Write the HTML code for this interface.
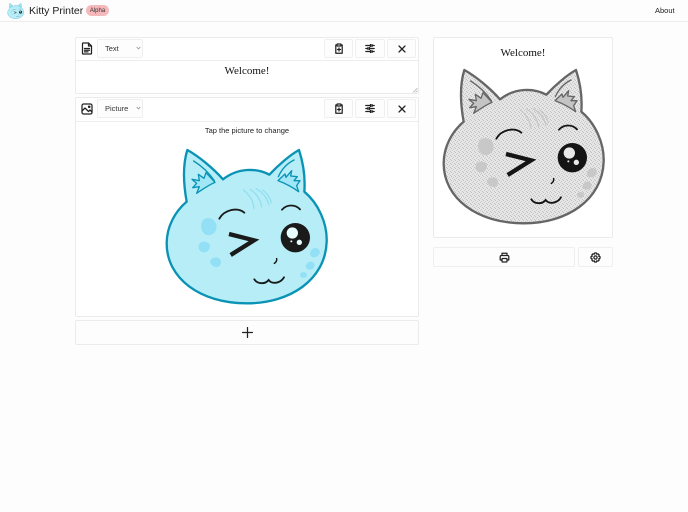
<!DOCTYPE html>
<html><head><meta charset="utf-8"><title>Kitty Printer</title>
<style>
html,body{margin:0;padding:0;width:688px;height:512px;overflow:hidden;background:#fdfdfd;font-family:"Liberation Sans",sans-serif;color:#222}
.a{position:absolute;box-sizing:border-box}
.card{border:1px solid #ebebeb;border-radius:2px;background:#fff}
.btn{border:1px solid #efefef;border-radius:2px;background:#fdfdfd;display:flex;align-items:center;justify-content:center}
.line{height:1px;background:#eeeeee}
svg{display:block}
.ic{fill:none;stroke:#222;stroke-width:1.25;stroke-linecap:round;stroke-linejoin:round}
.t{white-space:nowrap;line-height:1}
.blue{--body:#b6edf7;--ln:#0a93b5;--in:#a0e6f6;--sp:#93e0f6;--hair:#93dff0;--ink:#1a1a1a;--hi:#e8fbfd}
.gray{--body:url(#grain);--ln:#666;--in:#c4c4c4;--sp:#c8c8c8;--hair:#c8c8c8;--ink:#141414;--hi:#e8e8e8}
</style></head><body>
<svg width="0" height="0" style="position:absolute">
<defs>
<pattern id="grain" width="4" height="4" patternUnits="userSpaceOnUse" patternTransform="scale(3)">
 <rect width="4" height="4" fill="#e6e6e6"/>
 <rect x="0" y="0" width="1" height="1" fill="#c0c0c0"/><rect x="2" y="1" width="1" height="1" fill="#c6c6c6"/><rect x="1" y="2" width="1" height="1" fill="#ccc"/><rect x="3" y="3" width="1" height="1" fill="#c0c0c0"/>
</pattern>
<g id="cat">
 <path d="M112 30C145 48 190 85 219 118C265 82 320 84 358 104C385 75 420 45 447 30C460 70 466 115 463 155C505 190 532 250 530 305C526 420 420 490 290 490C150 490 50 415 50 310C50 260 75 215 110 185C100 130 98 75 112 30Z" style="fill:var(--body);stroke:var(--ln)" stroke-width="7" stroke-linejoin="round"/>
 <path d="M131 63C155 78 178 100 193 122M432 60C412 70 395 88 385 110" fill="none" style="stroke:var(--ln)" stroke-width="4" stroke-linecap="round"/>
 <path d="M126 118L148 122L145 103L162 115L168 98L195 127C175 135 155 150 140 160L148 140L128 143L140 130Z" style="fill:var(--in);stroke:var(--ln)" stroke-width="4" stroke-linejoin="round"/>
 <path d="M384 122L405 102L408 112L425 92L422 108L442 110L432 122L450 122L440 137L446 155C425 140 405 130 384 122Z" style="fill:var(--in);stroke:var(--ln)" stroke-width="4" stroke-linejoin="round"/>
 <g fill="none" style="stroke:var(--hair)" stroke-width="4" stroke-linecap="round">
  <path d="M280 150C300 165 310 185 312 205"/>
  <path d="M300 148C320 160 332 180 335 200"/>
  <path d="M318 146C340 158 352 175 357 195"/>
  <path d="M338 150C352 160 360 172 364 188"/>
 </g>
 <g style="fill:var(--sp)">
  <path d="M172 234C195 234 205 255 197 272C190 288 168 290 160 278C148 262 152 236 172 234Z"/>
  <path d="M160 305C178 303 185 318 176 330C168 342 150 338 146 325C144 314 150 306 160 305Z"/>
  <path d="M198 352C212 352 218 368 208 378C198 386 184 378 180 366C180 358 188 352 198 352Z"/>
  <path d="M495 324C508 324 514 336 506 345C498 355 484 354 480 345C478 335 485 325 495 324Z"/>
  <path d="M482 365C493 365 498 376 490 385C482 392 470 390 467 380C467 372 474 366 482 365Z"/>
  <path d="M460 396C470 396 474 404 468 411C460 416 450 412 450 405C450 400 455 396 460 396Z"/>
 </g>
 <path d="M208 236C222 210 262 200 283 218M396 209C410 193 435 192 450 208" fill="none" style="stroke:var(--ink)" stroke-width="5.5" stroke-linecap="round"/>
 <path d="M237 282L312 301L242 345" fill="none" style="stroke:var(--ink)" stroke-width="13" stroke-linejoin="miter"/>
 <circle cx="436" cy="293" r="44" style="fill:var(--ink)"/>
 <circle cx="427" cy="279" r="17" style="fill:var(--hi)"/>
 <circle cx="448" cy="307" r="8" style="fill:var(--hi)"/>
 <circle cx="424" cy="304" r="3" style="fill:var(--hi)"/>
 <path d="M380 356C381 362 378 367 373 370" fill="none" style="stroke:var(--ink)" stroke-width="4.5" stroke-linecap="round"/>
 <path d="M313 418C322 432 345 434 356 420C366 434 392 430 402 412" fill="none" style="stroke:var(--ink)" stroke-width="5.5" stroke-linecap="round"/>
</g>
</defs>
</svg>

<!-- nav -->
<div class="a" style="left:0;top:21px;width:688px;height:1px;background:#ececec"></div>
<svg class="a blue" style="left:7px;top:3px" width="17" height="16" viewBox="30 20 510 480"><use href="#cat"/></svg>
<div class="a t" style="left:29px;top:6px;font-size:10.5px;color:#1c1c1c">Kitty Printer</div>
<div class="a t" style="left:86px;top:5px;width:23px;height:11px;border-radius:6px;background:#f6b9bb;font-size:6px;line-height:12px;text-align:center;color:#333">Alpha</div>
<div class="a t" style="left:655px;top:7px;font-size:7.5px;color:#222">About</div>

<!-- text card -->
<div class="a card" style="left:75px;top:37px;width:344px;height:57px"></div>
<div class="a line" style="left:76px;top:60px;width:342px"></div>
<svg class="a ic" style="left:81px;top:42px" width="12" height="13" viewBox="0 0 12 13"><path d="M2 1H7.5L10.5 4V11.2Q10.5 12 9.6 12H2.4Q1.5 12 1.5 11.2V1.8Q1.5 1 2 1Z"/><path d="M7.5 1V4H10.5M3.5 6.5H8.5M3.5 8.2H8.5M3.5 9.9H7"/></svg>
<div class="a btn" style="left:97px;top:39px;width:46px;height:19px;justify-content:flex-start;padding-left:7px;font-size:7.5px;color:#333">Text</div>
<svg class="a" style="left:136px;top:46px" width="5" height="4" viewBox="0 0 5 4"><path d="M.7 1L2.5 3L4.3 1" fill="none" stroke="#888" stroke-width=".7"/></svg>
<div class="a btn" style="left:324px;top:39px;width:29px;height:19px"><svg class="ic" width="10" height="11" viewBox="0 0 10 11"><path d="M3 2H1.8V10.2H8.2V2H7"/><rect x="3" y="1" width="4" height="2" rx=".4"/><path d="M5 5V8M3.5 6.5H6.5"/></svg></div>
<div class="a btn" style="left:355px;top:39px;width:30px;height:19px"><svg class="ic" width="10" height="9" viewBox="0 0 10 9"><path d="M.8 1.5H5M7.5 1.5H9.2M.8 4.5H2.5M5 4.5H9.2M.8 7.5H5M7.5 7.5H9.2M5.5 .5V2.5M7 .5V2.5M3 3.5V5.5M4.5 3.5V5.5M5.5 6.5V8.5M7 6.5V8.5"/></svg></div>
<div class="a btn" style="left:387px;top:39px;width:29px;height:19px"><svg class="ic" width="8" height="8" viewBox="0 0 8 8"><path d="M1 1L7 7M7 1L1 7"/></svg></div>
<div class="a t" style="left:76px;top:66px;width:342px;text-align:center;font:11px/1 'Liberation Serif',serif;color:#111">Welcome!</div>
<svg class="a" style="left:412px;top:87px" width="6" height="6" viewBox="0 0 6 6"><path d="M1 5.5L5.5 1M3.5 5.5L5.5 3.5" stroke="#aaa" stroke-width=".7" fill="none"/></svg>

<!-- picture card -->
<div class="a card" style="left:75px;top:97px;width:344px;height:220px"></div>
<div class="a line" style="left:76px;top:121px;width:342px"></div>
<svg class="a ic" style="left:81px;top:103px" width="12" height="12" viewBox="0 0 12 12"><rect x="1" y="1" width="10" height="10" rx="1.6"/><path d="M1 8L4 5L7.5 8.5L9 7L11 9"/><circle cx="8.2" cy="3.8" r=".7"/></svg>
<div class="a btn" style="left:97px;top:99px;width:46px;height:19px;justify-content:flex-start;padding-left:7px;font-size:7.5px;color:#333">Picture</div>
<svg class="a" style="left:136px;top:106px" width="5" height="4" viewBox="0 0 5 4"><path d="M.7 1L2.5 3L4.3 1" fill="none" stroke="#888" stroke-width=".7"/></svg>
<div class="a btn" style="left:324px;top:99px;width:29px;height:19px"><svg class="ic" width="10" height="11" viewBox="0 0 10 11"><path d="M3 2H1.8V10.2H8.2V2H7"/><rect x="3" y="1" width="4" height="2" rx=".4"/><path d="M5 5V8M3.5 6.5H6.5"/></svg></div>
<div class="a btn" style="left:355px;top:99px;width:30px;height:19px"><svg class="ic" width="10" height="9" viewBox="0 0 10 9"><path d="M.8 1.5H5M7.5 1.5H9.2M.8 4.5H2.5M5 4.5H9.2M.8 7.5H5M7.5 7.5H9.2M5.5 .5V2.5M7 .5V2.5M3 3.5V5.5M4.5 3.5V5.5M5.5 6.5V8.5M7 6.5V8.5"/></svg></div>
<div class="a btn" style="left:387px;top:99px;width:29px;height:19px"><svg class="ic" width="8" height="8" viewBox="0 0 8 8"><path d="M1 1L7 7M7 1L1 7"/></svg></div>
<div class="a t" style="left:76px;top:127px;width:342px;text-align:center;font-size:7.5px;color:#222">Tap the picture to change</div>
<svg class="a blue" style="left:150px;top:140px" width="190" height="175" viewBox="0 0 570 525"><use href="#cat"/></svg>

<!-- add -->
<div class="a btn" style="left:75px;top:320px;width:344px;height:25px;border-color:#ebebeb"><svg class="ic" width="11" height="11" viewBox="0 0 11 11"><path d="M5.5 .5V10.5M.5 5.5H10.5"/></svg></div>

<!-- preview -->
<div class="a card" style="left:433px;top:37px;width:180px;height:201px"></div>
<svg class="a gray" style="left:426.7px;top:60px" width="190" height="175" viewBox="0 0 570 525"><use href="#cat"/></svg>
<div class="a t" style="left:434px;top:48px;width:178px;text-align:center;font:11px/1 'Liberation Serif',serif;color:#111">Welcome!</div>
<div class="a btn" style="left:433px;top:247px;width:142px;height:20px"><svg class="ic" width="11" height="11" viewBox="0 0 11 11"><path d="M3 3.5V1.2H8V3.5M3 8H1.2V4.8Q1.2 3.5 2.5 3.5H8.5Q9.8 3.5 9.8 4.8V8H8"/><rect x="3" y="6.5" width="5" height="3.5" rx=".5"/></svg></div>
<div class="a btn" style="left:578px;top:247px;width:35px;height:20px"><svg class="ic" width="11" height="11" viewBox="0 0 11 11"><path d="M4.6 1H6.4L6.8 2.2L8 1.8L9.2 3L8.7 4.2L10 4.6V6.4L8.8 6.8L9.2 8L8 9.2L6.8 8.8L6.4 10H4.6L4.2 8.8L3 9.2L1.8 8L2.2 6.8L1 6.4V4.6L2.2 4.2L1.8 3L3 1.8L4.2 2.2Z"/><circle cx="5.5" cy="5.5" r="1.6"/></svg></div>
</body></html>
